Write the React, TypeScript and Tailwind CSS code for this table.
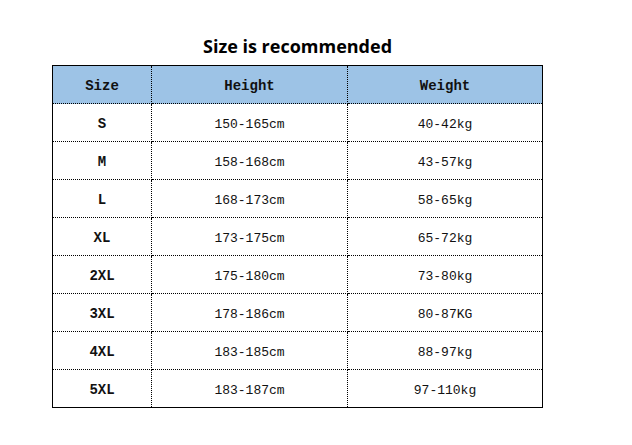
const rows = [
  ["S", "150-165cm", "40-42kg"],
  ["M", "158-168cm", "43-57kg"],
  ["L", "168-173cm", "58-65kg"],
  ["XL", "173-175cm", "65-72kg"],
  ["2XL", "175-180cm", "73-80kg"],
  ["3XL", "178-186cm", "80-87KG"],
  ["4XL", "183-185cm", "88-97kg"],
  ["5XL", "183-187cm", "97-110kg"],
];

export default function App() {
  return (
    <div className="w-[632px] h-[445px] bg-white pt-[35px]">
      <div className="ml-[52px] w-[491px]">
        <h1 className="text-center text-[18px] font-bold text-black leading-[22px] [font-family:'Open_Sans',sans-serif]">
          Size is recommended
        </h1>
        <table className="mt-[8px] w-[491px] border-collapse border border-black [font-family:'Liberation_Mono',monospace] text-[13px] text-[#111]">
          <thead>
            <tr className="h-[38px] bg-[#9dc3e6]">
              <th className="w-[99px] pt-1 border-b border-r border-dotted border-black font-bold text-[14px]">Size</th>
              <th className="w-[196px] pt-1 border-b border-r border-dotted border-black font-bold text-[14px]">Height</th>
              <th className="pt-1 border-b border-dotted border-black font-bold text-[14px]">Weight</th>
            </tr>
          </thead>
          <tbody>
            {rows.map((r, i) => (
              <tr key={i} className="h-[38px]">
                <td className="pt-1 border-b border-r border-dotted border-black text-center font-bold text-[14px]">{r[0]}</td>
                <td className="pt-1 border-b border-r border-dotted border-black text-center">{r[1]}</td>
                <td className="pt-1 border-b border-dotted border-black text-center">{r[2]}</td>
              </tr>
            ))}
          </tbody>
        </table>
      </div>
    </div>
  );
}
